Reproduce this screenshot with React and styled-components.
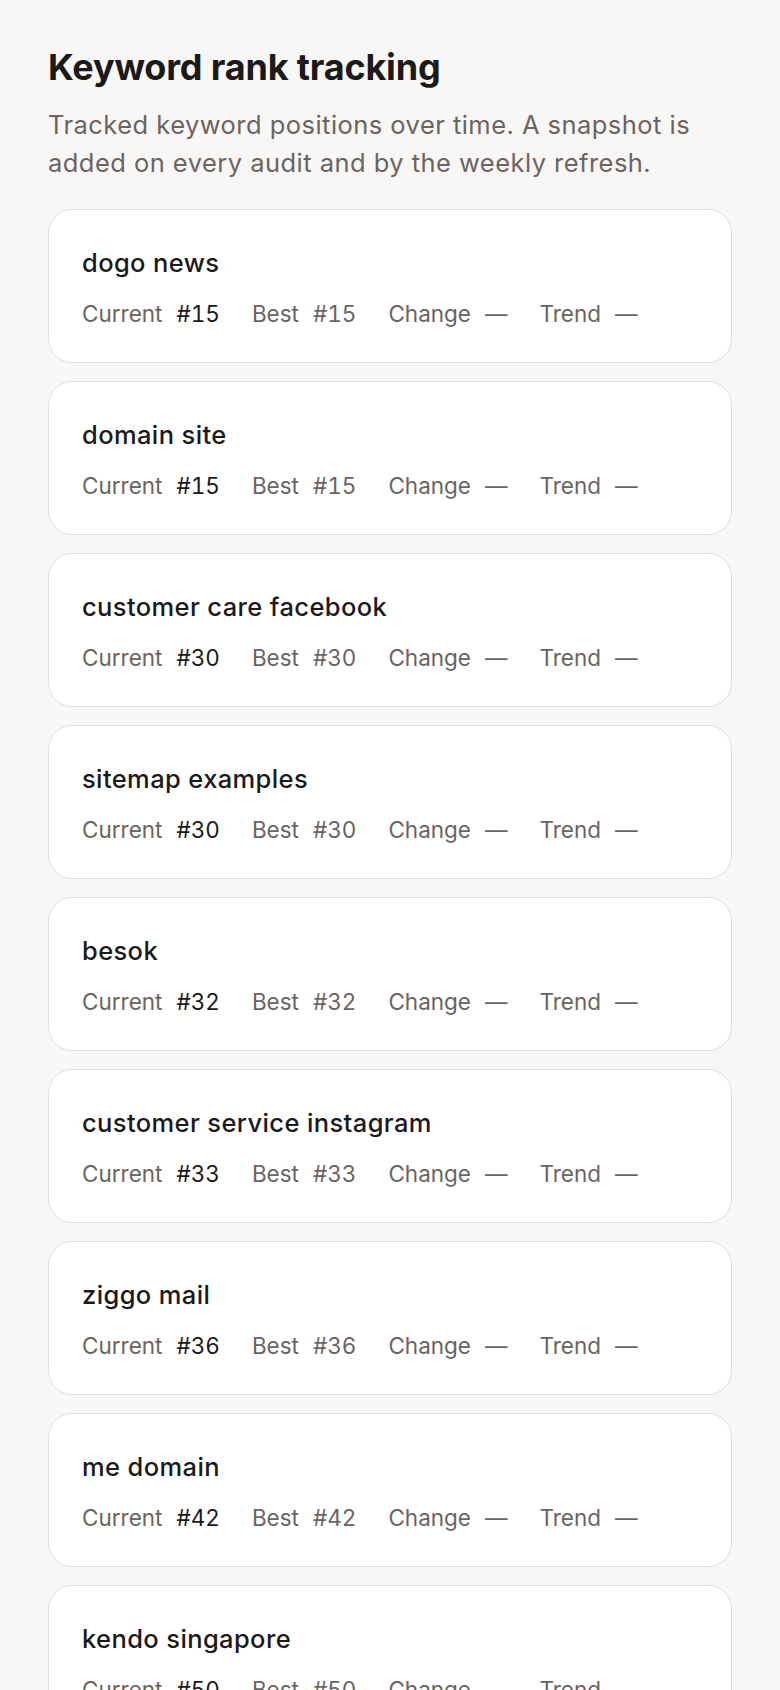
import React from 'react';
import styled, { createGlobalStyle } from 'styled-components';

const GlobalStyle = createGlobalStyle`
  * { box-sizing: border-box; }
  body {
    margin: 0;
    background: #f8f7f5;
    font-family: Inter, "Noto Sans", sans-serif;
    color: #1c1a19;
  }
`;

const Page = styled.main`
  padding: 45px 48px 48px;
`;

const Title = styled.h1`
  margin: 0;
  font-size: 36px;
  line-height: 44px;
  font-weight: 700;
  letter-spacing: -0.005em;
  color: #1c1a19;
`;

const Intro = styled.p`
  margin: 17px 0 27px;
  font-size: 25.5px;
  line-height: 38px;
  letter-spacing: 0.018em;
  color: #6b6461;
`;

const List = styled.div`
  display: flex;
  flex-direction: column;
  gap: 18px;
`;

const Card = styled.article`
  background: #fff;
  border: 1.5px solid #e3dfdc;
  border-radius: 24px;
  padding: 38px 33px 33px;
`;

const Keyword = styled.div`
  font-size: 25.5px;
  line-height: 30px;
  font-weight: 450;
  letter-spacing: 0.015em;
  color: #1c1a19;
`;

const Metrics = styled.div`
  display: flex;
  gap: 32px;
  margin-top: 21px;
  font-size: 22.5px;
  line-height: 30px;
`;

const Metric = styled.span`
  display: flex;
  gap: 14px;
`;

const Label = styled.span`
  color: #6b6461;
`;

const Value = styled.span`
  font-variant-numeric: tabular-nums;
  color: ${(p) => (p.$strong ? '#1c1a19' : '#6b6461')};
`;

const keywords = [
  { term: 'dogo news', current: 15, best: 15 },
  { term: 'domain site', current: 15, best: 15 },
  { term: 'customer care facebook', current: 30, best: 30 },
  { term: 'sitemap examples', current: 30, best: 30 },
  { term: 'besok', current: 32, best: 32 },
  { term: 'customer service instagram', current: 33, best: 33 },
  { term: 'ziggo mail', current: 36, best: 36 },
  { term: 'me domain', current: 42, best: 42 },
  { term: 'kendo singapore', current: 50, best: 50 },
];

const App = () => (
  <>
    <GlobalStyle />
    <Page>
      <Title>Keyword rank tracking</Title>
      <Intro>
        Tracked keyword positions over time. A snapshot is added on every audit and by the weekly refresh.
      </Intro>
      <List>
        {keywords.map((k) => (
          <Card key={k.term}>
            <Keyword>{k.term}</Keyword>
            <Metrics>
              <Metric>
                <Label>Current</Label>
                <Value $strong>#{k.current}</Value>
              </Metric>
              <Metric>
                <Label>Best</Label>
                <Value>#{k.best}</Value>
              </Metric>
              <Metric>
                <Label>Change</Label>
                <Value>—</Value>
              </Metric>
              <Metric>
                <Label>Trend</Label>
                <Value>—</Value>
              </Metric>
            </Metrics>
          </Card>
        ))}
      </List>
    </Page>
  </>
);

export default App;
